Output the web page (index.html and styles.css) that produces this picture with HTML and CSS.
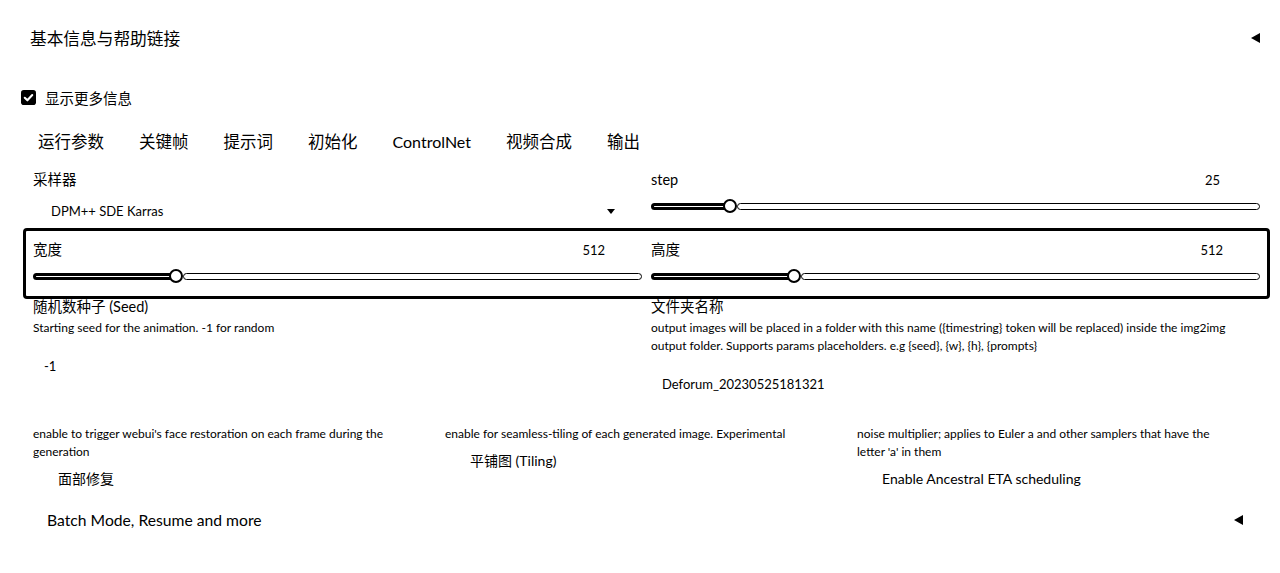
FILE: index.html
```html
<!DOCTYPE html>
<html lang="zh">
<head>
<meta charset="utf-8">
<link rel="stylesheet" href="styles.css">
</head>
<body>
<div class="page">
  <div class="acc-header">
    <span class="acc-title">基本信息与帮助链接</span>
    <span class="tri"></span>
  </div>

  <label class="check-row">
    <span class="checkbox"><svg viewBox="0 0 16 16" width="16" height="16"><rect x="0" y="0" width="16" height="16" rx="3" fill="#000"/><path d="M4 8.3 L6.8 11 L12 5.3" fill="none" stroke="#fff" stroke-width="2.2" stroke-linecap="round" stroke-linejoin="round"/></svg></span>
    <span class="check-label">显示更多信息</span>
  </label>

  <div class="tabs">
    <span class="tab">运行参数</span>
    <span class="tab">关键帧</span>
    <span class="tab">提示词</span>
    <span class="tab">初始化</span>
    <span class="tab">ControlNet</span>
    <span class="tab">视频合成</span>
    <span class="tab">输出</span>
  </div>

  <div class="content">
    <div class="row2">
      <div class="field">
        <div class="label">采样器</div>
        <div class="dropdown">
          <span>DPM++ SDE Karras</span>
          <span class="down"></span>
        </div>
      </div>
      <div class="field">
        <div class="slider-head"><span class="label">step</span><span class="val">25</span></div>
        <div class="slider"><div class="fill" style="width:12.7%"></div><div class="thumb"></div><div class="rest"></div></div>
      </div>
    </div>

    <div class="boxed row2">
      <div class="field">
        <div class="slider-head"><span class="label">宽度</span><span class="val">512</span></div>
        <div class="slider"><div class="fill" style="width:23.1%"></div><div class="thumb"></div><div class="rest"></div></div>
      </div>
      <div class="field">
        <div class="slider-head"><span class="label">高度</span><span class="val">512</span></div>
        <div class="slider"><div class="fill" style="width:23.1%"></div><div class="thumb"></div><div class="rest"></div></div>
      </div>
    </div>

    <div class="row2 text-row">
      <div class="field">
        <div class="label">随机数种子 (Seed)</div>
        <div class="desc">Starting seed for the animation. -1 for random</div>
        <div class="input">-1</div>
      </div>
      <div class="field">
        <div class="label">文件夹名称</div>
        <div class="desc">output images will be placed in a folder with this name ({timestring} token will be replaced) inside the img2img output folder. Supports params placeholders. e.g {seed}, {w}, {h}, {prompts}</div>
        <div class="input">Deforum_20230525181321</div>
      </div>
    </div>

    <div class="row3">
      <div class="field">
        <div class="desc">enable to trigger webui's face restoration on each frame during the generation</div>
        <div class="cb-label">面部修复</div>
      </div>
      <div class="field">
        <div class="desc">enable for seamless-tiling of each generated image. Experimental</div>
        <div class="cb-label">平铺图 (Tiling)</div>
      </div>
      <div class="field">
        <div class="desc">noise multiplier; applies to Euler a and other samplers that have the letter 'a' in them</div>
        <div class="cb-label">Enable Ancestral ETA scheduling</div>
      </div>
    </div>

    <div class="acc-header sub">
      <span class="acc-title">Batch Mode, Resume and more</span>
      <span class="tri"></span>
    </div>
  </div>
</div>
</body>
</html>
```

FILE: styles.css
```css
* { box-sizing: border-box; }
html, body { margin: 0; padding: 0; background: #fff; }
body {
  font-family: Lato, "Noto Sans CJK SC", sans-serif;
  color: #000;
  width: 1280px;
  height: 573px;
  overflow: hidden;
}
.page { padding: 0; }

.acc-header {
  display: flex;
  align-items: center;
  justify-content: space-between;
  height: 76px;
  padding: 0 20px 0 30px;
}
.acc-title { font-size: 16.7px; }
.tri {
  width: 0; height: 0;
  border-top: 5px solid transparent;
  border-bottom: 5px solid transparent;
  border-right: 9px solid #000;
}

.check-row {
  display: flex;
  align-items: center;
  gap: 9px;
  height: 42px;
  padding-left: 21px;
}
.checkbox { width: 15px; height: 15px; display: flex; }
.checkbox svg { width: 15px; height: 15px; }
.check-label { font-size: 14.5px; }

.tabs {
  display: flex;
  align-items: center;
  height: 46px;
  padding-left: 20.5px;
}
.tab { font-size: 16.5px; padding: 0 17.5px; }
.tab:nth-child(5) { font-size: 16px; }

.content { padding: 6px 20px 0 33px; }

.row2 {
  display: grid;
  grid-template-columns: 1fr 1fr;
  column-gap: 9px;
}
.label { font-size: 14.5px; line-height: 20px; }

.dropdown {
  display: flex;
  align-items: center;
  justify-content: space-between;
  height: 34px;
  padding: 0 27px 0 18px;
  font-size: 13px;
  margin-top: 4px;
}
.down {
  width: 0; height: 0;
  border-left: 4px solid transparent;
  border-right: 4px solid transparent;
  border-top: 5px solid #000;
}

.slider-head {
  display: flex;
  justify-content: space-between;
  align-items: center;
  padding-right: 40px;
}
.boxed .slider-head { padding-right: 37px; }
.val { font-size: 13px; }
.slider {
  display: flex;
  align-items: center;
  height: 14px;
  margin-top: 9px;
}
.fill {
  height: 7px;
  border: 3px solid #000;
  border-radius: 4px 0 0 4px;
  background: #fff;
  flex: none;
}
.thumb {
  width: 14px; height: 14px;
  border: 2px solid #000;
  border-radius: 50%;
  background: #fff;
  flex: none;
  margin-left: -5px;
}
.rest {
  flex: 1;
  height: 7px;
  border: 1px solid #000;
  border-radius: 4px;
}

.boxed {
  margin: 0 -10px 0 -10px;
  border: 3px solid #000;
  border-radius: 4px;
  padding: 9px 7px 13px 7px;
}

.text-row { margin-top: -2px; }
.desc { font-size: 12px; line-height: 18px; margin-top: 2px; }
.input { font-size: 13px; padding: 11px 11px; line-height: 18px; margin-top: 9px; }

.row3 {
  display: grid;
  grid-template-columns: 1fr 1fr 1fr;
  column-gap: 9px;
  margin-top: 19px;
}
.row3 .desc { padding-right: 25px; }
.cb-label { font-size: 14px; padding-left: 25px; margin-top: 8px; line-height: 20px; }

.acc-header.sub {
  height: 46px;
  padding: 0 17px 0 14px;
  margin-top: 8px;
}
.acc-header.sub .acc-title { font-size: 15.7px; }
```
